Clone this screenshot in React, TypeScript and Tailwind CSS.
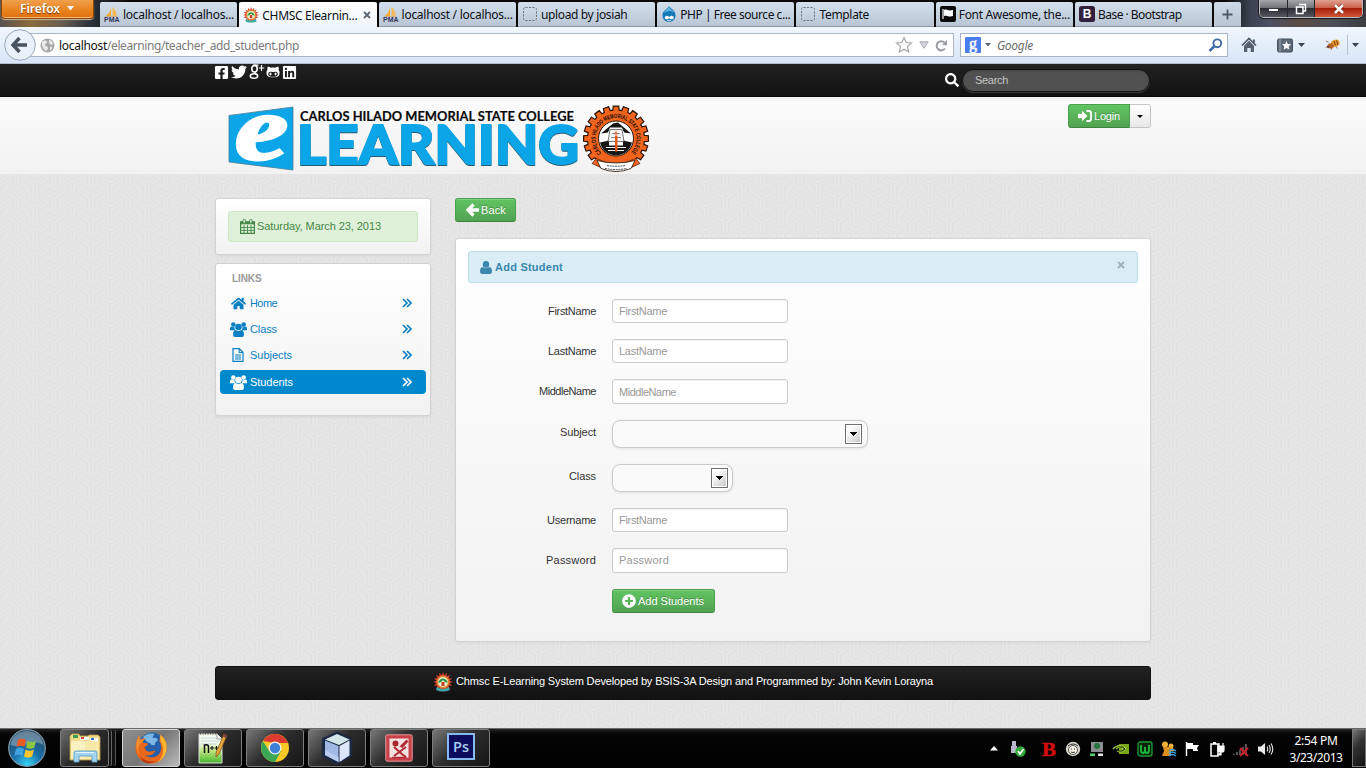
import React, { useLayoutEffect, useRef } from "react";
import {
  FaFacebookSquare,
  FaTwitter,
  FaGithubAlt,
  FaLinkedin,
  FaSearch,
  FaHome,
  FaPlusCircle,
} from "react-icons/fa";

/* Text run whose tracking is adjusted so that it spans a given width. */
function Fit({ w, children, className = "" }: { w: number; children: string; className?: string }) {
  const ref = useRef<HTMLSpanElement>(null);
  useLayoutEffect(() => {
    const el = ref.current;
    if (!el) return;
    el.style.letterSpacing = "0px";
    const natural = el.getBoundingClientRect().width;
    const step = (w - natural) / children.length;
    el.style.letterSpacing = `${step}px`;
  }, [w, children]);
  return (
    <span ref={ref} className={`inline-block whitespace-pre ${className}`}>
      {children}
    </span>
  );
}

/* ---------- favicons ---------- */

const Pma = () => (
  <svg width="16" height="16" viewBox="0 0 16 16" className="shrink-0 overflow-visible">
    <path d="M7 0C7 4 5 8 1.500 10H7z" fill="#f7a928" />
    <path d="M8.500 1c3 2.500 4.500 6 4 9h-4z" fill="#f5b95a" />
    <path d="M1 10h13l-1.500 1h-10z" fill="#c9b08a" />
    <text x="0" y="16" fontSize="6.500" fontWeight="bold" fontFamily="Liberation Sans, sans-serif" fill="#34345f" textLength="15.500" lengthAdjust="spacingAndGlyphs">PMA</text>
  </svg>
);

const rays = (n: number, r1: number, r2: number) => {
  const pts: string[] = [];
  for (let i = 0; i < n * 2; i++) {
    const a = (i * Math.PI) / n;
    const r = i % 2 ? r1 : r2;
    pts.push(`${(r * Math.sin(a)).toFixed(2)},${(-r * Math.cos(a)).toFixed(2)}`);
  }
  return pts.join(" ");
};

const Badge = ({ size }: { size: number }) => (
  <svg width={size} height={size} viewBox="-10 -10 20 20" className="shrink-0">
    <polygon points={rays(16, 6.5, 9.9)} fill="#d8412a" />
    <circle r="6.500" fill="#e8862c" />
    <circle r="5" fill="#e9f1d4" />
    <path d="M-4.800 1C-3.500-5 3.500-5 4.800 1L2 0 0-2-2 0z" fill="#2b8c3a" />
    <path d="M-1.500 4V0h3v4z" fill="#c43c2b" />
    <path d="M-6 5q6 4 12 0l1 3q-7 3-14 0z" fill="#3fa9a5" />
  </svg>
);

const Dashed = () => (
  <svg width="16" height="16" viewBox="0 0 16 16" className="shrink-0">
    <rect x="1.500" y="1.500" width="13" height="13" rx="2" fill="none" stroke="#6c7783" strokeDasharray="2.200 1.200" />
  </svg>
);

const Drupal = () => (
  <svg width="16" height="16" viewBox="0 0 16 16" className="shrink-0">
    <path d="M8 0c.5 2.200 6.500 3.800 6.500 9A6.600 6.600 0 0 1 8 16 6.600 6.600 0 0 1 1.500 9C1.500 4.500 7 3 8 0z" fill="#1477b8" />
    <path d="M8 0c0 3 4.500 4 5.500 7C10 3.500 6 5 3 7 4 4 7.500 3 8 0z" fill="#5fb2e2" />
    <path d="M4 11c1.500-2 3-1 4.200 0 1.200-1 2.700-2 4.300-.5 1 1.500-.3 2.800-1.500 2.800-1.200 0-2-.9-2.800-.9s-1.600.9-2.700.9C4 13.300 3.300 12 4 11z" fill="#fff" />
    <path d="M6 14.300q2 1 4 0" stroke="#fff" fill="none" strokeWidth=".8" />
  </svg>
);

const FlagIcon = () => (
  <svg width="16" height="16" viewBox="0 0 16 16" className="shrink-0">
    <rect width="16" height="16" rx="2" fill="#0c0c0c" />
    <path d="M3 3v10" stroke="#fff" strokeWidth="1.200" />
    <path d="M4 4c2.500-1.300 4 1.300 9 0v6c-4 1.500-6-1.200-9 0z" fill="#fff" />
  </svg>
);

const BootIcon = () => (
  <svg width="16" height="16" viewBox="0 0 16 16" className="shrink-0">
    <rect width="16" height="16" rx="2.500" fill="#33203f" />
    <text x="8" y="12.300" textAnchor="middle" fontSize="12" fontWeight="bold" fontFamily="Liberation Sans, sans-serif" fill="#fff">B</text>
  </svg>
);

/* ---------- browser chrome ---------- */

const tabs: { icon: React.ReactNode; label: string; w: number; active?: boolean }[] = [
  { icon: <Pma />, label: "localhost / localhos...", w: 111 },
  { icon: <Badge size={16} />, label: "CHMSC Elearnin...", w: 95, active: true },
  { icon: <Pma />, label: "localhost / localhos...", w: 111 },
  { icon: <Dashed />, label: "upload by josiah", w: 86.5 },
  { icon: <Drupal />, label: "PHP | Free source c...", w: 110 },
  { icon: <Dashed />, label: "Template", w: 49.5 },
  { icon: <FlagIcon />, label: "Font Awesome, the...", w: 111 },
  { icon: <BootIcon />, label: "Base · Bootstrap", w: 83.5 },
];

function TabStrip() {
  return (
    <div className="flex h-[27px] items-start bg-[linear-gradient(90deg,#55534f_0,#8a6a3a_30px,#6a5f50_60px,#2b333d_90px,#080808_130px,#0a0a0a_1225px,#3c4150_1250px,#4c5064_1270px,#5a4c44_1300px,#4d5058_1330px,#3b3d42_1366px)]">
      <div className="ml-px flex h-[19px] w-[93px] items-center rounded-b-[4px] border border-t-0 border-[#8d4708] bg-[linear-gradient(#f0a04c,#e8811c_60%,#de7010)] pl-[18px] shadow-[inset_0_-1px_0_#f7b775,0_1px_1px_#c9b9a0]">
        <Fit w={40} className="-mt-[1px] text-[12px] leading-[17px] font-semibold text-white [text-shadow:0_1px_1px_#6b3300]">Firefox</Fit>
        <svg width="7" height="5" viewBox="0 0 7 5" className="mb-0.5 ml-[7px]">
          <path d="M0 0h7L3.500 4.500z" fill="#fff" />
        </svg>
      </div>
      <div className="ml-[6px] flex h-[25px] gap-[2px] self-end">
        {tabs.map((t, i) => (
          <div
            key={i}
            className={
              t.active
                ? "flex h-[25px] w-[137.3px] items-center rounded-t-[2px] bg-[linear-gradient(#ffffff,#eff5fd)] pl-1"
                : "flex h-[25px] w-[137.3px] items-center rounded-t-[2px] border-b border-[#8e99a8] bg-[linear-gradient(#d3dfeb,#c6d3e1_50%,#b9c5d2)] pl-1"
            }
          >
            {t.icon}
            <Fit w={t.w} className="mt-[2px] ml-[3px] text-[12px] leading-[22px] text-[#0d1117]">{t.label}</Fit>
            {t.active && (
              <svg width="8" height="8" viewBox="0 0 8 8" className="ml-[6px]">
                <path d="M1 1l6 6M7 1L1 7" stroke="#5c6673" strokeWidth="1.800" />
              </svg>
            )}
          </div>
        ))}
        <div className="flex h-[25px] w-[27px] items-center justify-center rounded-t-[2px] border-b border-[#8e99a8] bg-[linear-gradient(#cfdbe7,#b9c5d2)]">
          <svg width="11" height="11" viewBox="0 0 11 11">
            <path d="M5.500 .5v10M.5 5.500h10" stroke="#4d5a68" strokeWidth="1.800" />
          </svg>
        </div>
      </div>
      <div className="mr-[3px] ml-auto flex h-[18px] w-[104px] overflow-hidden rounded-b-[5px] border border-t-0 border-[#b9bcc2] shadow-[0_0_0_1px_#1b1b1b]">
        <div className="flex w-[28px] items-end justify-center border-r border-[#24262a] bg-[linear-gradient(#a4a6aa,#6b6e74_50%,#2a2c32_50%,#55585f)] pb-[5px]">
          <div className="h-[4px] w-[11px] border border-[#33363c] bg-white" />
        </div>
        <div className="flex w-[27px] items-center justify-center border-r border-[#24262a] bg-[linear-gradient(#a4a6aa,#6b6e74_50%,#2a2c32_50%,#55585f)]">
          <svg width="12" height="12" viewBox="0 0 12 12">
            <path d="M4 1.500h6.500v6.500H8.500M1.500 4h6.500v6.500H1.500z" fill="none" stroke="#fff" strokeWidth="1.500" />
          </svg>
        </div>
        <div className="flex flex-1 items-center justify-center bg-[linear-gradient(#e0a090,#cc5d48_48%,#a81d08_50%,#d0573a)]">
          <svg width="12" height="10" viewBox="0 0 12 10">
            <path d="M2 1l8 8M10 1L2 9" stroke="#7c1a0c" strokeWidth="4" />
            <path d="M2 1l8 8M10 1L2 9" stroke="#fff" strokeWidth="2.600" />
          </svg>
        </div>
      </div>
    </div>
  );
}

function Toolbar() {
  return (
    <div className="flex h-[37px] items-center border-b border-[#b4bfcd] bg-[linear-gradient(#f1f6fd,#e4eefa_50%,#d7e5f8)]">
      <svg width="32" height="34" viewBox="0 0 32 34" className="relative z-10 ml-1 shrink-0">
        <circle cx="16" cy="17" r="15.300" fill="#e9f1fb" stroke="#98a6b8" />
        <path d="M15.500 10L9 17l6.500 7M9.500 17H23" fill="none" stroke="#47535f" strokeWidth="3.400" />
      </svg>
      <div className="-ml-[6px] flex h-[24px] w-[924px] items-center border border-[#a9b5c6] bg-white">
        <svg width="15" height="15" viewBox="0 0 15 15" className="ml-[9px] shrink-0">
          <circle cx="7.500" cy="7.500" r="7" fill="#a7a7a7" />
          <path d="M3 3c2-1 4-.5 4 1S5 5.500 5 7s3 1 3 3-2 3-2 3-4-3-4-6 0-3 1-4zM9 2c2 0 4 2 4 4l-2 1-2-2z" fill="#e8e8e8" />
          <path d="M10 9l2.500-.5-1 3-1.500 1z" fill="#e8e8e8" />
        </svg>
        <Fit w={48} className="mt-[2px] ml-[4px] text-[12px] leading-[20px] text-[#111]">localhost</Fit>
        <Fit w={192} className="mt-[2px] text-[12px] leading-[20px] text-[#7b7b7b]">/elearning/teacher_add_student.php</Fit>
        <div className="ml-auto flex items-center pr-[5px]">
          <svg width="18" height="18" viewBox="0 0 18 18">
            <path d="M9 1.500l2.200 5 5.300.5-4 3.600 1.200 5.400L9 13.200 4.300 16l1.200-5.400-4-3.600 5.300-.5z" fill="#fdfdfd" stroke="#a3a3a3" strokeWidth="1.100" />
          </svg>
          <svg width="10" height="8" viewBox="0 0 10 8" className="ml-[6px]">
            <path d="M.8.8h8.400L5 7.200z" fill="#d5d5dc" stroke="#a9a9b2" />
          </svg>
          <svg width="13" height="13" viewBox="0 0 13 13" className="ml-[6px]">
            <path d="M10 9.500A4.600 4.600 0 1 1 9.500 3.500" fill="none" stroke="#9a9da3" strokeWidth="2" />
            <path d="M12 .8v5.400H6.800z" fill="#9a9da3" />
          </svg>
        </div>
      </div>
      <div className="ml-[6px] flex h-[24px] w-[268px] items-center border border-[#a9b5c6] bg-white">
        <svg width="16" height="16" viewBox="0 0 16 16" className="ml-[4px] shrink-0 overflow-visible">
          <rect width="16" height="16" rx="1" fill="#4a7df0" />
          <text x="8" y="11.500" textAnchor="middle" fontSize="16" fontFamily="Liberation Serif, serif" fill="#fff" stroke="#fff" strokeWidth=".5">g</text>
        </svg>
        <svg width="6" height="4" viewBox="0 0 6 4" className="ml-[4px]">
          <path d="M0 0h6L3 3.500z" fill="#5b6470" />
        </svg>
        <Fit w={36} className="mt-[2px] ml-[6px] text-[12px] leading-[20px] text-[#6c6c6c] italic">Google</Fit>
        <svg width="15" height="15" viewBox="0 0 15 15" className="mr-[4px] ml-auto">
          <circle cx="9.300" cy="5.300" r="3.900" fill="none" stroke="#3d6ba6" strokeWidth="1.900" />
          <path d="M6.300 8.300L1.500 13" stroke="#3d6ba6" strokeWidth="2.600" />
        </svg>
      </div>
      <svg width="16" height="16" viewBox="0 0 16 16" className="ml-[13px]">
        <path d="M1 8.500L8 1.500l7 7" fill="none" stroke="#4d5966" strokeWidth="1.700" />
        <path d="M3 8.700l5-5 5 5V15H9.700v-4H6.300v4H3z" fill="#56626f" />
        <path d="M12 2.500h1.800v4L12 5z" fill="#4d5966" />
      </svg>
      <svg width="16" height="15" viewBox="0 0 16 15" className="ml-[20px]">
        <rect x=".5" y="1" width="15" height="13" rx="1.500" fill="#5f6b79" stroke="#45505d" />
        <path d="M3 1v13" stroke="#9aa5b3" />
        <path d="M9.500 3l1.300 3 3.200.3-2.400 2.100.7 3.200-2.800-1.700-2.800 1.700.7-3.200L5 6.300l3.200-.3z" fill="#fff" />
      </svg>
      <svg width="7" height="4" viewBox="0 0 7 4" className="ml-[5px]">
        <path d="M0 0h7L3.500 4z" fill="#39424d" />
      </svg>
      <svg width="16" height="14" viewBox="0 0 18 14" className="ml-[20px]">
        <path d="M4 4L1 2.500M8 9l-1 3.500M12 8l2 3M3 8L1 10" stroke="#7a5a3a" strokeWidth=".9" />
        <ellipse cx="11.500" cy="5" rx="5" ry="4" transform="rotate(-20 11.500 5)" fill="#eb9a2d" />
        <ellipse cx="6.500" cy="8" rx="3.500" ry="3" fill="#b5682a" />
        <path d="M10 2.500l2 5M13 2l1.500 5" stroke="#5d2f0c" />
        <circle cx="3.500" cy="9" r="1.500" fill="#6a4632" />
      </svg>
      <div className="ml-[6px] h-5 w-px bg-[#b5c0ce]" />
      <svg width="7" height="4" viewBox="0 0 7 4" className="ml-[4px]">
        <path d="M0 0h7L3.500 4z" fill="#39424d" />
      </svg>
    </div>
  );
}

/* ---------- page ---------- */

function Backdrop() {
  const arm = "M0 0L-9-5.500M0 0L9-5.500M0-1V12";
  const spots = [
    [18.65, -12],
    [0, 0],
    [37.3, 0],
    [18.65, 12],
    [0, 24],
    [37.3, 24],
    [18.65, 36],
  ];
  return (
    <svg className="absolute inset-0 h-full w-full">
      <defs>
        <pattern id="weave" width="37.3" height="24" x="16.500" y="12.500" patternUnits="userSpaceOnUse">
          <rect width="37.300" height="24" fill="#e5e5e5" />
          {spots.map(([x, y], i) => (
            <g key={i} transform={`translate(${x} ${y})`} fill="none">
              <path d={arm} stroke="#dedede" strokeWidth="8" />
              <path d={arm} stroke="#e7e7e7" strokeWidth="6.200" />
              <path d={arm} stroke="#e0e0e0" strokeWidth="1.200" />
            </g>
          ))}
        </pattern>
      </defs>
      <rect width="100%" height="100%" fill="url(#weave)" />
    </svg>
  );
}

const gear = (() => {
  const n = 20;
  let d = "";
  for (let i = 0; i < n; i++) {
    const c = (i * 2 * Math.PI) / n;
    const pts: [number, number][] = [
      [-0.11, 28.5],
      [-0.085, 32.5],
      [0.085, 32.5],
      [0.11, 28.5],
    ];
    for (const [o, r] of pts) {
      d += `${d ? "L" : "M"}${(r * Math.sin(c + o)).toFixed(2)} ${(-r * Math.cos(c + o)).toFixed(2)}`;
    }
  }
  return d + "z";
})();

function Logo() {
  return (
    <svg width="424" height="76" viewBox="228 98 424 76" className="shrink-0 overflow-visible">
      <path d="M229 115.500L293 107v63l-64-8z" fill="#0ba5e8" stroke="#4a7d96" strokeWidth=".8" />
      <text x="235" y="158.500" fontSize="92" fontWeight="bold" fontStyle="italic" fontFamily="Liberation Serif, serif" fill="#fff" stroke="#fff" strokeWidth="3" textLength="53" lengthAdjust="spacingAndGlyphs">e</text>
      <text x="300" y="121" fontSize="13.200" fontWeight="bold" fontFamily="Lato, sans-serif" fill="#0b0b0b" stroke="#0b0b0b" strokeWidth=".2" textLength="274" lengthAdjust="spacingAndGlyphs">CARLOS HILADO MEMORIAL STATE COLLEGE</text>
      <text x="297" y="164" fontSize="53" fontWeight="900" fontFamily="Lato, sans-serif" fill="#0ba5e8" stroke="#0ba5e8" strokeWidth="1.800" textLength="282" lengthAdjust="spacingAndGlyphs" className="drop-shadow-[0.7px_1px_0_#2a5c75]">LEARNING</text>
      <g transform="translate(616 138.500)">
        <path d={gear} fill="#f0641e" stroke="#26130a" strokeWidth="1.200" />
        <path id="ring" d="M-14.500 14.500A20.500 20.500 0 1 1 14.500 14.500" fill="none" />
        <text fontSize="6.200" fontWeight="bold" fontFamily="Liberation Sans, sans-serif" fill="#1a0d05">
          <textPath href="#ring" textLength="95" lengthAdjust="spacingAndGlyphs">CARLOS HILADO MEMORIAL STATE COLLEGE</textPath>
        </text>
        <circle r="17.500" fill="#fff" stroke="#26130a" />
        <path d="M-15-5L-3-15l5-1 13 11-7-1-2-5h-12l-2 5z" fill="#151515" />
        <path d="M-16 4l9-2v5h14V2l9 2q-3 12-16 13Q-13 16-16 4z" fill="#161616" />
        <path d="M-6-9H6L8 3H-8z" fill="#f5f5f5" stroke="#222" strokeWidth=".6" />
        <path d="M-4-5h8M-5-1h10" stroke="#555" strokeWidth=".7" />
        <path d="M-10 9h20M-8 12H8" stroke="#fff" strokeWidth="1" />
        <path d="M-1-3h2.500V13H-1z" fill="#e8591a" />
        <path d="M0-8l1.500 4H-1.500z" fill="#e8591a" />
        <path d="M-20 20q20 10 40 0l4 5q-24 14-48 0z" fill="#f0641e" stroke="#26130a" strokeWidth=".6" />
        <path d="M-19 22q19 5 38 0l-4 8q-15 6-30 0z" fill="#fff" stroke="#26130a" strokeWidth=".8" />
        <path d="M-9 27q9 1.500 18 0M-11 30q11 2 22 0" stroke="#333" strokeWidth=".9" strokeDasharray="2 .7" fill="none" />
      </g>
    </svg>
  );
}

const GooglePlus = () => (
  <svg width="16" height="16" viewBox="0 0 16 16" className="overflow-visible">
    <ellipse cx="5.500" cy="4.700" rx="2.700" ry="3.300" fill="none" stroke="#fff" strokeWidth="1.600" />
    <path d="M4.500 1.200h5M6.500 8c-2.500 1 1.800 1.800 2 3.600" fill="none" stroke="#fff" strokeWidth="1.300" />
    <ellipse cx="5" cy="12" rx="3.700" ry="2.300" fill="none" stroke="#fff" strokeWidth="1.500" />
    <path d="M12.500 1v6M9.700 4h5.600" stroke="#fff" strokeWidth="1.200" />
  </svg>
);

const Calendar = () => (
  <svg width="15" height="15" viewBox="0 0 15 15" className="shrink-0">
    <path d="M.6 3h13.800v11.400H.6z" fill="none" stroke="#468847" strokeWidth="1.200" />
    <path d="M0 2.300h15v3H0z" fill="#468847" />
    <path d="M4 6v8M7.500 6v8M11 6v8M1 8.500h13M1 11.400h13" stroke="#468847" strokeWidth=".9" />
    <rect x="3" y=".4" width="2.400" height="3.800" rx="1" fill="#dff0d8" stroke="#468847" strokeWidth=".9" />
    <rect x="9.600" y=".4" width="2.400" height="3.800" rx="1" fill="#dff0d8" stroke="#468847" strokeWidth=".9" />
  </svg>
);

const Group = () => (
  <svg width="17" height="15" viewBox="0 0 17 15" fill="currentColor">
    <circle cx="3.300" cy="2.600" r="2.300" />
    <circle cx="13.700" cy="2.600" r="2.300" />
    <path d="M0 8.200V6.500Q0 4.600 1.500 4.600 3.300 5.800 4.700 5 4.300 7 5.200 8.200z" />
    <path d="M17 8.200V6.500q0-1.900-1.500-1.900-1.800 1.200-3.200.4.400 2-.5 3.200z" />
    <circle cx="8.500" cy="5" r="3.300" />
    <path d="M3 12.700Q3 8 5.700 7.900q2.800 2 5.600 0Q14 8 14 12.700q0 2.300-2 2.300H5q-2 0-2-2.300z" />
  </svg>
);

const Person = () => (
  <svg width="12" height="13" viewBox="0 0 12 13" fill="currentColor">
    <ellipse cx="6" cy="3.400" rx="3.200" ry="3.400" />
    <path d="M0 10.600Q0 6.400 2.700 6 6 8.700 9.300 6 12 6.400 12 10.600 12 13 10 13H2Q0 13 0 10.600z" />
  </svg>
);

const Chevrons = () => (
  <svg width="10" height="10" viewBox="0 0 10 10" className="ml-auto">
    <path d="M1 1l4 4-4 4M5 1l4 4-4 4" fill="none" stroke="currentColor" strokeWidth="1.700" />
  </svg>
);

const FileText = () => (
  <svg width="12" height="14" viewBox="0 0 12 14">
    <path d="M1 .7h6.300L11 4.300v9H1z" fill="none" stroke="currentColor" strokeWidth="1.200" />
    <path d="M7.200.8v3.700H11M3 7h6M3 9h6M3 11h6" fill="none" stroke="currentColor" strokeWidth="1.100" />
  </svg>
);

const Arrow = () => (
  <svg width="13" height="14" viewBox="0 0 13 14">
    <path d="M7.500 1.500L2 7l5.500 5.500M3 7h10" fill="none" stroke="#fff" strokeWidth="3.300" />
  </svg>
);

const SignIn = () => (
  <svg width="14" height="12" viewBox="0 0 14 12">
    <path d="M0 3.800h4V.8L9.500 6 4 11.200v-3H0z" fill="#fff" />
    <path d="M8.500 1H11a2 2 0 0 1 2 2v6a2 2 0 0 1-2 2H8.500" fill="none" stroke="#fff" strokeWidth="1.800" />
  </svg>
);

const links = [
  { icon: <FaHome size={15} />, label: "Home", w: 27 },
  { icon: <Group />, label: "Class", w: 27 },
  { icon: <FileText />, label: "Subjects", w: 42 },
  { icon: <Group />, label: "Students", w: 43, active: true },
];

function Sidebar() {
  return (
    <aside className="flex w-[216px] shrink-0 flex-col gap-[8px]">
      <div className="h-[57px] rounded-[3px] border border-[#d3d3d3] bg-[linear-gradient(#ffffff,#f2f2f2)] px-3 pt-3 shadow-[0_1px_3px_rgba(0,0,0,.06)]">
        <div className="flex h-[31px] w-[190px] items-center rounded-[3px] border border-[#d0e6c0] bg-[#dff0d8] pl-[11px] text-[#468847]">
          <Calendar />
          <Fit w={124} className="-mt-[2px] ml-[2px]">Saturday, March 23, 2013</Fit>
        </div>
      </div>
      <div className="h-[153px] rounded-[3px] border border-[#d3d3d3] bg-[linear-gradient(#ffffff,#f2f2f2)] px-1 pt-[7px] shadow-[0_1px_3px_rgba(0,0,0,.06)]">
        <div className="pl-3 text-[10px] leading-4 font-bold text-[#999]">
          <Fit w={29.5}>LINKS</Fit>
        </div>
        <ul className="mt-[3px]">
          {links.map((l) => (
            <li
              key={l.label}
              className={
                l.active
                  ? "mt-[2px] flex h-6 items-center rounded-[4px] bg-[#0088cc] pr-[14px] text-white"
                  : "flex h-[26px] items-center pr-[14px] text-[#0b7fc4]"
              }
            >
              <span className="flex w-[36px] justify-center">{l.icon}</span>
              <Fit w={l.w} className="-ml-[6px]">{l.label}</Fit>
              <Chevrons />
            </li>
          ))}
        </ul>
      </div>
    </aside>
  );
}

const greenBtn =
  "flex h-6 items-center rounded-[3px] border border-[#4a9f4a] border-b-[#3d853d] bg-[linear-gradient(#62c462,#51a351)] text-white shadow-[inset_0_1px_0_rgba(255,255,255,.2)] [text-shadow:0_-1px_0_rgba(0,0,0,.25)]";

function Field({ label, lw, placeholder, pw, size = "h-[24px]" }: { label: string; lw: number; placeholder: string; pw: number; size?: string }) {
  return (
    <div className="flex items-start">
      <div className="flex w-[128px] justify-end leading-6 text-[#333]">
        <Fit w={lw}>{label}</Fit>
      </div>
      <div className={`ml-[16px] flex w-[176px] items-center rounded-[3px] border border-[#ccc] bg-white pl-[6px] text-[#999] shadow-[inset_0_1px_1px_rgba(0,0,0,.05)] ${size}`}>
        <Fit w={pw}>{placeholder}</Fit>
      </div>
    </div>
  );
}

function SelectField({ label, lw, wide }: { label: string; lw: number; wide?: boolean }) {
  return (
    <div className="flex items-start">
      <div className="flex w-[128px] justify-end leading-6 text-[#333]">
        <Fit w={lw}>{label}</Fit>
      </div>
      <div className={`ml-[16px] flex h-[28px] items-center justify-end rounded-[8px] border border-[#ccc] bg-[#fafafa] shadow-[0_1px_3px_rgba(0,0,0,.1)] ${wide ? "w-[256px] pr-[5px]" : "w-[121px] pr-[4px]"}`}>
        <div className="flex h-[20px] w-[17px] items-center justify-center border border-[#6f6f6f] bg-[linear-gradient(135deg,#fafafa_30%,#c4c4c4)] shadow-[inset_0_0_0_1px_#fff]">
          <svg width="7" height="4" viewBox="0 0 7 4" shapeRendering="crispEdges">
            <path d="M0 0h7L3.500 4z" fill="#000" />
          </svg>
        </div>
      </div>
    </div>
  );
}

function Page() {
  return (
    <div className="relative flex h-[664px] flex-col font-['Liberation_Sans',Arial,sans-serif] text-[11px] leading-5">
      <Backdrop />
      <div className="relative flex h-[33px] items-start border-b border-[#0a0a0a] bg-[linear-gradient(#222222,#111111)] pl-[214px]">
        <div className="flex h-[16px] items-center text-white">
          <FaFacebookSquare size={15} />
          <FaTwitter size={16} className="ml-[2px]" />
          <span className="ml-[2px]"><GooglePlus /></span>
          <FaGithubAlt size={14} className="ml-[1px]" />
          <FaLinkedin size={15} className="ml-[2px]" />
        </div>
        <FaSearch size={14} className="mt-[9px] ml-[648px] text-white" />
        <div className="mt-[5px] ml-[3px] flex h-[23px] w-[188px] items-center rounded-full border border-[#111] bg-[#515151] pl-[12px] text-[#c4c4c4] shadow-[inset_0_1px_2px_rgba(0,0,0,.15),0_1px_0_rgba(255,255,255,.15)]">
          <Fit w={33} className="-mt-[1px]">Search</Fit>
        </div>
      </div>
      <div className="relative flex h-[77px] items-start bg-[linear-gradient(#ececec,#fbfbfb_5px,#f2f2f2)] pl-[228px]">
        <div className="mt-[1px]">
          <Logo />
        </div>
        <div className="mt-[7px] ml-[416px] flex h-6">
          <div className="flex h-6 w-[62px] items-center rounded-l-[3px] border border-[#4a9f4a] border-b-[#3d853d] bg-[linear-gradient(#62c462,#51a351)] pl-[9px] text-white [text-shadow:0_-1px_0_rgba(0,0,0,.25)]">
            <SignIn />
            <Fit w={26} className="ml-[2px]">Login</Fit>
          </div>
          <div className="flex h-6 w-[21px] items-center justify-center rounded-r-[3px] border border-l-0 border-[#c5c5c5] bg-[linear-gradient(#ffffff,#e8e8e8)]">
            <svg width="6" height="3" viewBox="0 0 6 3">
              <path d="M0 0h6L3 3z" fill="#000" />
            </svg>
          </div>
        </div>
      </div>
      <div className="relative ml-[215px] flex w-[936px] gap-6 pt-6">
        <Sidebar />
        <main className="w-[696px]">
          <div className={`${greenBtn} w-[61px] pl-[10px]`}>
            <Arrow />
            <Fit w={25} className="ml-[2px]">Back</Fit>
          </div>
          <div className="mt-[16px] h-[404px] rounded-[3px] border border-[#d3d3d3] bg-[linear-gradient(#ffffff,#f2f2f2)] px-3 pt-3 shadow-[0_1px_3px_rgba(0,0,0,.06)]">
            <div className="flex h-[32px] items-center rounded-[3px] border border-[#bce0e9] bg-[#d9edf7] pr-3 pl-[11px] text-[#3a87ad]">
              <Person />
              <Fit w={68} className="ml-[3px] font-bold">Add Student</Fit>
              <svg width="8" height="8" viewBox="0 0 8 8" className="mb-[5px] ml-auto">
                <path d="M1 1l6 6M7 1L1 7" stroke="#9fb3bd" strokeWidth="2" />
              </svg>
            </div>
            <div className="mt-4 flex flex-col gap-4">
              <Field label="FirstName" lw={48} placeholder="FirstName" pw={48} />
              <Field label="LastName" lw={48} placeholder="LastName" pw={48} />
              <Field label="MiddleName" lw={57} placeholder="MiddleName" pw={57} size="h-[25px]" />
              <SelectField label="Subject" lw={36} wide />
              <SelectField label="Class" lw={27} />
              <Field label="Username" lw={49} placeholder="FirstName" pw={48} />
              <Field label="Password" lw={50} placeholder="Password" pw={50} size="h-[25px] pb-[2px]" />
              <div className={`${greenBtn} ml-[144px] w-[103px] pl-[9px]`}>
                <FaPlusCircle size={14} />
                <Fit w={66} className="ml-[2px]">Add Students</Fit>
              </div>
            </div>
          </div>
        </main>
      </div>
      <footer className="relative mt-6 ml-[215px] flex h-[34px] w-[936px] items-center justify-center rounded-[3px] border border-[#111] bg-[linear-gradient(#222222,#111111)] pb-[2px] text-white">
        <Badge size={20} />
        <Fit w={477} className="-mt-[2px] ml-[3px]">Chmsc E-Learning System Developed by BSIS-3A Design and Programmed by: John Kevin Lorayna</Fit>
      </footer>
    </div>
  );
}

/* ---------- taskbar ---------- */

const StartOrb = () => (
  <svg width="40" height="40" viewBox="0 0 40 40" className="-mt-px ml-[7px] shrink-0">
    <defs>
      <radialGradient id="orb" cx=".5" cy=".95" r=".9">
        <stop offset="0" stopColor="#34d3f5" />
        <stop offset=".45" stopColor="#1b6ea8" />
        <stop offset="1" stopColor="#27455f" />
      </radialGradient>
    </defs>
    <circle cx="20" cy="20" r="18.300" fill="url(#orb)" stroke="#7d98a8" strokeWidth="1.200" />
    <path d="M3.500 17C5 8 12 3 20 3s15 5 16.500 14q-8-5-16-1T3.500 17z" fill="#b6cbd8" opacity=".45" />
    <path d="M11 12q4-3 8 0l-1.600 7q-4-2.500-8 0z" fill="#ee5a24" />
    <path d="M20.500 12.700q4 2.500 8.500 0l-1.800 7q-4 2.300-8.200 0z" fill="#8cc63e" />
    <path d="M9 21q4-2.800 8 0l-1.700 7q-4-2.600-8 0z" fill="#3fa3e0" />
    <path d="M18.600 21.500q4 2.500 8.300 0l-1.800 7q-4 2.300-8.200 0z" fill="#fbc62e" />
  </svg>
);

const Explorer = () => (
  <svg width="34" height="32" viewBox="0 0 34 32">
    <path d="M2 4l2-2h7l1 2h8l1-1h9l2 2v23H2z" fill="#efd98a" stroke="#bf9f4e" strokeWidth=".8" />
    <path d="M5 3h5v3H5z" fill="#3f9c57" />
    <path d="M12 5h9v3h-9z" fill="#fff" />
    <path d="M22 6h8v3h-8z" fill="#fff" />
    <path d="M13 5h3v2h-3z" fill="#d2422d" />
    <path d="M23 6h3v2h-3z" fill="#3678c2" />
    <path d="M3 9h28v18H3z" fill="#f8e9ab" />
    <path d="M3 9h14v18H3z" fill="#fbf0bf" />
    <path d="M6 30V21q0-2 2-2h19q2 0 2 2v9h-5v-6H11v6z" fill="#a5d4ee" stroke="#5e9fc4" strokeWidth=".9" />
    <path d="M8 20.500h18" stroke="#e3f5ff" />
  </svg>
);

const Firefox = () => (
  <svg width="34" height="34" viewBox="0 0 34 34">
    <circle cx="18" cy="14.500" r="13" fill="#275fa8" />
    <path d="M9 6q5-5 12-3-3 2-2 4 4-1 5 2-4 3-3 5-4 1-5-2-3 0-7-6z" fill="#7db7e6" />
    <path d="M26 4c5 3 7 8 6.500 14C31.500 27 25 32.500 17 32.500 9 32.500 2 26.500 1.500 18 1.300 12 3 7.500 5 5l1 4c1.500-1 3-1.500 5-1.500L8.500 11c1 1.500 5 .5 5.500 2-.5 2-3 2.500-3.500 3.500 1 4 5 5 8 3.500l3-.5c-1.500 4-7 6-10.500 4.500 4 4 12.500 3 15-2.500 2-4 1.500-8-.5-11z" fill="#e8681c" />
    <path d="M26 4c5 3 7 8 6.500 14-.7 6-4 11-9 13 6-5 7.500-14 3-21z" fill="#fbb62d" />
    <path d="M5 5l1 4c1.500-1 3-1.500 5-1.500L8.500 11C5 13 3 18 5.500 24 2 20 .5 11 5 5z" fill="#f08a2c" />
    <path d="M5 24q6 8 17 6-7 4.500-13 .5z" fill="#b93a13" />
  </svg>
);

const NotepadPP = () => (
  <svg width="32" height="34" viewBox="0 0 32 34">
    <defs>
      <linearGradient id="npp" x1="0" y1="0" x2="0" y2="1">
        <stop offset=".3" stopColor="#f4faee" />
        <stop offset=".6" stopColor="#b8e27a" />
        <stop offset="1" stopColor="#45b52f" />
      </linearGradient>
    </defs>
    <path d="M2 3h18l5 5v24H2z" fill="url(#npp)" stroke="#dcdcdc" />
    <path d="M3 2.500h17" stroke="#555" strokeWidth="2" strokeDasharray="1 1.500" />
    <path d="M4 7h16M4 10h18M4 13h15" stroke="#b9c9d8" strokeWidth=".7" />
    <path d="M20 3v5h5" fill="#fff" stroke="#9a9a9a" />
    <path d="M7.500 22v-8q4-1 4 2v6" fill="none" stroke="#111" strokeWidth="1.500" />
    <path d="M13 17h4M15 15v4M17.500 17h4M19.500 15v4" stroke="#111" strokeWidth="1.100" />
    <path d="M27 3l3 1.500L22 23l-3 3 0-4.500z" fill="#e5a43a" stroke="#7a5122" strokeWidth=".7" />
    <path d="M27 3l3 1.500-1 2.500-3-1.500z" fill="#7d3c40" />
  </svg>
);

const Chrome = () => (
  <svg width="30" height="30" viewBox="-15 -15 30 30">
    <circle r="14" fill="#f6c927" />
    <path d="M-12.100-7A14 14 0 0 1 12.100-7L13-5H0z" fill="#dd3b2f" />
    <path d="M-12.100-7A14 14 0 0 0 0 14L6 3-5.500 3.500z" fill="#3aa757" />
    <circle r="6.500" fill="#f4f4f4" />
    <circle r="5.200" fill="#3f7fd6" />
  </svg>
);

const Cube = () => (
  <svg width="32" height="34" viewBox="0 0 32 34">
    <path d="M16 1.500L30 8v17L16 32.500 2 25V8z" fill="#1c2a44" stroke="#1c2a44" strokeWidth="2" strokeLinejoin="round" />
    <path d="M16 3l12.500 5.500L18 14 4 8.500z" fill="#d3e6ea" />
    <path d="M4 9.500L17.500 15v16L4 24z" fill="#9fb8e4" />
    <path d="M28.500 9.500L18.500 15v16l10-6.500z" fill="#dce6f8" />
    <path d="M4 19l13.500 7v5L4 24z" fill="#b9ccf0" />
  </svg>
);

const RedTool = () => (
  <svg width="28" height="28" viewBox="0 0 28 28">
    <rect x=".8" y=".8" width="26.400" height="26.400" rx="1.500" fill="#c8414a" stroke="#e59a9c" />
    <rect x="4.500" y="4.500" width="19" height="19" fill="#f4e2e0" />
    <circle cx="10.500" cy="9.500" r="3" fill="#a8262e" />
    <path d="M21.500 5.500l2 2-6 6.500-3-1.500z" fill="#b02b33" />
    <path d="M9 13l9 8M21 13L9 22M14 18l7 5" stroke="#b02b33" strokeWidth="2" />
    <path d="M7 23.500h14" stroke="#b02b33" strokeWidth="1.500" />
  </svg>
);

const Photoshop = () => (
  <svg width="28" height="27" viewBox="0 0 28 27" className="mb-[4px]">
    <rect x="1" y="1" width="26" height="25" fill="#0b0d5c" stroke="#86b9ee" strokeWidth="2" />
    <text x="14" y="18.500" textAnchor="middle" fontSize="14.500" fontWeight="600" fontFamily="Open Sans, sans-serif" fill="#a9cdf5">Ps</text>
  </svg>
);

const apps = [<Explorer />, <Firefox />, <NotepadPP />, <Chrome />, <Cube />, <RedTool />, <Photoshop />];

const tray: React.ReactNode[] = [
  <>
    <path d="M2 0h4v5H2zM1 5h6v7H1z" fill="#b9b5cc" />
    <circle cx="10.500" cy="10.500" r="5.200" fill="#31a83a" />
    <path d="M8 10l2 3 3.500-5" stroke="#fff" strokeWidth="1.600" fill="none" />
  </>,
  <>
    <text x="1" y="14.500" fontSize="19" fontWeight="bold" fontFamily="Liberation Serif, serif" fill="#d40d0d" stroke="#d40d0d" strokeWidth=".5" textLength="14" lengthAdjust="spacingAndGlyphs">B</text>
  </>,
  <>
    <circle cx="8" cy="8" r="7.200" fill="#d8d8cc" />
    <circle cx="8" cy="9" r="4.500" fill="#f6f2e4" stroke="#555" />
    <path d="M3 5q5-4 10 0M6 8h1M9 8h1M6 11q2 1 4 0" stroke="#333" fill="none" />
  </>,
  <>
    <path d="M2 1h12v10H2z" fill="#8b8f93" />
    <circle cx="8" cy="5" r="3" fill="#23743d" />
    <path d="M1 12.500h5v2.500H1z" fill="#50d36c" />
    <path d="M9 12.500h5v2.500H9z" fill="#e6e6e6" />
  </>,
  <>
    <path d="M6 3h10v10H6z" fill="#76a51b" />
    <path d="M0 8q5-6 13-1-4 6-9 3M3 8q4-4 7-.5-2 3-4 1" fill="none" stroke="#9dc53a" strokeWidth="1.200" />
    <path d="M6 6q4-1 6 2-3 3-6 2" fill="none" stroke="#1c2a05" />
  </>,
  <>
    <rect x="1" y="1" width="14" height="14" rx="2" fill="#04240a" stroke="#1f9a35" strokeWidth="1.300" />
    <path d="M4 4v5q0 3 2 3t2-3V6v3q0 3 2 3t2-3V4" fill="none" stroke="#1fb53b" strokeWidth="1.900" />
  </>,
  <>
    <circle cx="4" cy="3.500" r="3" fill="#f0b13a" />
    <circle cx="10" cy="5" r="2.500" fill="#f0b13a" />
    <path d="M2 6h6l4 1 2 3-4 0v5H1l2-5z" fill="#e08e20" />
    <path d="M8 10q3-3 7 0M8 12.500q3-3 7 0M8 15q3-3 7 0" fill="none" stroke="#3aa8e6" strokeWidth="1.500" />
  </>,
  <>
    <path d="M1.500 1v14" stroke="#fff" strokeWidth="1.400" />
    <path d="M2 2h6v2h6l-2 3 1 3H8V8H2z" fill="#fff" />
  </>,
  <>
    <path d="M2 3h7v12H2z" fill="none" stroke="#fff" strokeWidth="1.500" />
    <path d="M4 1h3v2H4z" fill="#fff" />
    <path d="M9 5h6v4q0 2-2 2h-2q-2 0-2-2zM10 2v3M14 2v3M12 11v3H8" fill="#fff" stroke="#fff" strokeWidth="1.200" />
  </>,
  <>
    <path d="M1 13v1M4 11v3M7 9v5M10 6v8M13 3v11" stroke="#5e5e5e" strokeWidth="1.800" />
    <path d="M7 7l8 8M15 7l-8 8" stroke="#c8202a" strokeWidth="2.200" />
  </>,
  <>
    <path d="M1 5.500h3L8 2v12l-4-3.500H1z" fill="#e9e9e9" />
    <path d="M10 5.500q1.500 2.500 0 5M12 4q2.500 4 0 8M14 2.500q3.500 5.500 0 11" fill="none" stroke="#e9e9e9" strokeWidth="1.100" />
  </>,
];

function Taskbar() {
  return (
    <div className="flex h-[40px] items-start border-t border-[#6a6a6a] bg-[linear-gradient(#222222,#050505_5px,#000000)]">
      <StartOrb />
      <div className="ml-[13px] flex gap-[4px]">
        {apps.map((icon, i) => (
          <div
            key={i}
            className={
              i === 1
                ? "flex h-[38px] w-[58px] items-center justify-center rounded-[3px] border border-[#d5d5d5] bg-[linear-gradient(135deg,#8e8e8e,#777777_50%,#b9b9b9)]"
                : i === 0
                  ? "mr-[9px] flex h-[38px] w-[49px] items-center justify-center rounded-[3px] border border-[#7e7e7e] bg-[linear-gradient(135deg,#6e6e6e,#2b2b2b_50%,#191919)] shadow-[3px_0_0_-1px_#111,4px_0_0_-1px_#666,7px_0_0_-1px_#111,8px_0_0_-1px_#555]"
                  : "flex h-[38px] w-[58px] items-center justify-center rounded-[3px] border border-[#7e7e7e] bg-[linear-gradient(135deg,#777777,#2e2e2e_45%,#151515)]"
            }
          >
            {icon}
          </div>
        ))}
      </div>
      <div className="ml-auto flex h-[39px] items-center">
        <svg width="8" height="5" viewBox="0 0 8 5" className="mr-[12px]">
          <path d="M0 4.500h8L4 0z" fill="#fff" />
        </svg>
        {tray.map((t, i) => (
          <svg key={i} width="16" height="16" viewBox="0 0 16 16" className={`overflow-visible ${i === 0 ? "mr-[15px]" : "mr-[8px]"}`}>
            {t}
          </svg>
        ))}
      </div>
      <div className="mt-[3px] ml-[3px] flex w-[64px] flex-col items-center text-[12px] leading-[17px] text-white">
        <Fit w={43}>2:54 PM</Fit>
        <Fit w={53}>3/23/2013</Fit>
      </div>
      <div className="ml-[4px] h-[38px] w-[14px] border border-[#777] bg-[linear-gradient(135deg,#777777,#333333_40%,#111111)]" />
    </div>
  );
}

export default function App() {
  return (
    <div className="flex h-[768px] w-[1366px] flex-col overflow-hidden bg-white font-['Noto_Sans',sans-serif]">
      <TabStrip />
      <Toolbar />
      <Page />
      <Taskbar />
    </div>
  );
}
